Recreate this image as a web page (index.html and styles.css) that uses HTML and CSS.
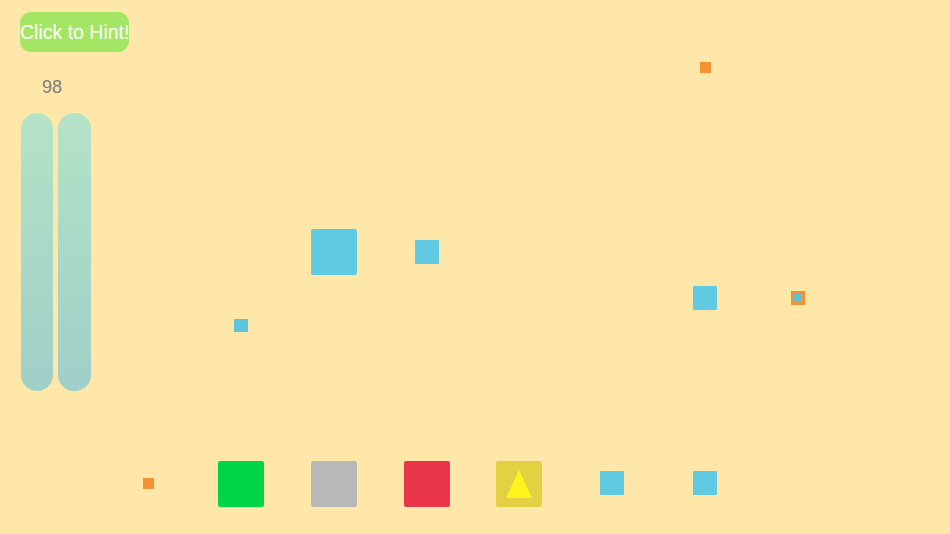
FILE: index.html
```html
<!DOCTYPE html>
<html>
<head>
<meta charset="utf-8">
<link rel="stylesheet" href="styles.css">
</head>
<body>
<div class="stage">
  <div class="hud">
    <button class="hint-btn">Click to Hint!</button>
    <div class="score">98</div>
    <div class="bars">
      <div class="bar bar-a"></div>
      <div class="bar bar-b"></div>
    </div>
  </div>

  <div class="piece dot orange" style="left:700px;top:62px"></div>
  <div class="piece big blue" style="left:311px;top:229px"></div>
  <div class="piece mid blue" style="left:415px;top:240px"></div>
  <div class="piece tiny blue" style="left:234px;top:319px"></div>
  <div class="piece mid blue" style="left:693px;top:286px"></div>
  <div class="piece framed" style="left:791px;top:291px"></div>

  <div class="piece dot orange" style="left:143px;top:478px"></div>
  <div class="piece big green" style="left:218px;top:461px"></div>
  <div class="piece big gray" style="left:311px;top:461px"></div>
  <div class="piece big red" style="left:404px;top:461px"></div>
  <div class="piece big yellow" style="left:496px;top:461px">
    <svg class="tri" width="46" height="46" viewBox="0 0 46 46"><polygon points="23,9 36,37 10,37" fill="#fff31c"/></svg>
  </div>
  <div class="piece mid blue" style="left:600px;top:471px"></div>
  <div class="piece mid blue" style="left:693px;top:471px"></div>
</div>
</body>
</html>
```

FILE: styles.css
```css
html, body {
  margin: 0;
  padding: 0;
}
body {
  background: #ffe7a9;
  font-family: "Liberation Sans", Arial, sans-serif;
}
.stage {
  position: relative;
  width: 950px;
  height: 534px;
  overflow: hidden;
}
.hud {
  display: flex;
  flex-direction: column;
  align-items: flex-start;
  padding: 12px 0 0 20px;
}
.hint-btn {
  width: 109px;
  height: 40px;
  border: none;
  border-radius: 11px;
  background: #a3e663;
  color: #ffffff;
  font-family: "Liberation Sans", Arial, sans-serif;
  font-size: 19.5px;
  padding: 0;
  white-space: nowrap;
}
.score {
  margin: 25px 0 0 22px;
  font-size: 18px;
  line-height: 21px;
  color: #7d7d7d;
}
.bars {
  display: flex;
  gap: 5px;
  margin: 15px 0 0 1px;
}
.bar {
  height: 278px;
  border-radius: 16px;
  background: linear-gradient(to bottom, #b4e3c7, #9fcfc8);
}
.bar-a { width: 32px; }
.bar-b { width: 33px; }

.piece {
  position: absolute;
  box-sizing: border-box;
}
.dot { width: 11px; height: 11px; }
.tiny { width: 14px; height: 13px; }
.mid { width: 24px; height: 24px; border-radius: 1px; }
.big { width: 46px; height: 46px; border-radius: 2px; }
.orange { background: #f39232; }
.blue { background: #62cbe4; }
.tiny.blue { background: #5ec6dc; }
.green { background: #00d447; }
.gray { background: #b8b8b8; }
.red { background: #e9364a; }
.yellow { background: #e3d143; }
.tri { display: block; }
.framed {
  width: 14px;
  height: 14px;
  border: 3px solid #f39232;
  background: #5fc2d8;
}
```
